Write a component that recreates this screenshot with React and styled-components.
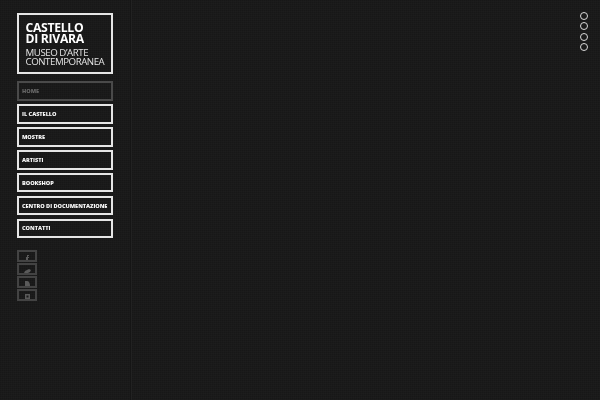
import React from 'react';
import styled, { createGlobalStyle } from 'styled-components';

const GlobalStyle = createGlobalStyle`
    html, body {
        margin: 0;
        padding: 0;
        height: 100%;
        background-color: #1a1a1a;
    }
    #root {
        height: 100%;
    }
`;

const Page = styled.div`
    display: flex;
    flex-direction: row;
    width: 600px;
    height: 400px;
    overflow: hidden;
    font-family: "Open Sans", "Liberation Sans", sans-serif;
    background-color: #1a1a1a;
    background-image:
        repeating-linear-gradient(0deg, rgba(255,255,255,0.012) 0 1px, transparent 1px 2px),
        repeating-linear-gradient(90deg, rgba(0,0,0,0.1) 0 1px, transparent 1px 2px);
`;

const Sidebar = styled.aside`
    box-sizing: border-box;
    width: 131px;
    height: 100%;
    padding: 13px 0 0 17px;
    border-right: 1px solid #151515;
    box-shadow: 1px 0 0 #222;
    will-change: transform;
`;

const Logo = styled.div`
    box-sizing: border-box;
    width: 96px;
    height: 61px;
    padding: 7px 0 0 6.5px;
    margin-bottom: 7.4px;
    border: 2px solid #e6e6e6;
    color: #fff;
    text-transform: uppercase;
`;

const LogoTitle = styled.div`
    font-size: 12.2px;
    line-height: 11.2px;
    font-weight: 700;
    letter-spacing: -0.3px;
    margin-bottom: 4.5px;
`;

const LogoSub = styled.div`
    font-size: 9.7px;
    line-height: 8.8px;
    font-weight: 400;
    letter-spacing: -0.45px;
    color: #e4e4e4;
    white-space: nowrap;
`;

const Nav = styled.nav`
    display: flex;
    flex-direction: column;
    gap: 3.4px;
    width: 96px;
    margin-bottom: 12px;
`;

const NavItem = styled.a`
    box-sizing: border-box;
    display: flex;
    align-items: center;
    height: 19.5px;
    padding-left: 3px;
    border: 2px solid ${p => (p.$current ? '#4a4a4a' : '#e6e6e6')};
    color: ${p => (p.$current ? '#666' : '#f6f6f6')};
    font-size: 5.6px;
    font-weight: 800;
    letter-spacing: -0.04px;
    text-transform: uppercase;
    white-space: nowrap;
`;

const Social = styled.div`
    display: flex;
    flex-direction: column;
    gap: 1px;
`;

const SocialLink = styled.a`
    box-sizing: border-box;
    display: flex;
    align-items: flex-end;
    justify-content: center;
    width: 20px;
    height: 12px;
    overflow: hidden;
    border: 2px solid #434343;
    color: #5a5a5a;
`;

const Main = styled.main`
    flex: 1;
    display: flex;
    justify-content: flex-end;
    padding: 12px 12px 0 0;
`;

const Dots = styled.div`
    display: flex;
    flex-direction: column;
    gap: 2.4px;
`;

const Dot = styled.span`
    box-sizing: border-box;
    display: block;
    width: 8px;
    height: 8px;
    border: 1.5px solid #d8d8d8;
    border-radius: 50%;
`;

const icons = [
    <path key="f" d="M3 6V3h1V1h2v1H5v1h1v1H5v2z" fill="currentColor" />,
    <path key="t" d="M1 6l1-2 2-1 2-1 2 1-1 2-2 1z" fill="currentColor" />,
    <path key="r" d="M2 6V1h2c2 0 3 2 3 5z" fill="currentColor" />,
    <path key="i" d="M2 1h5v5H2zM3.5 2.5v2h2v-2z" fill="currentColor" fillRule="evenodd" />,
];

const menu = ['Il Castello', 'Mostre', 'Artisti', 'Bookshop', 'Centro di documentazione', 'Contatti'];

export default function App() {
    return (
        <Page>
            <GlobalStyle />
            <Sidebar>
                <Logo>
                    <LogoTitle>Castello<br />di Rivara</LogoTitle>
                    <LogoSub>Museo d’arte<br />contemporanea</LogoSub>
                </Logo>
                <Nav>
                    <NavItem $current>Home</NavItem>
                    {menu.map(m => <NavItem key={m}>{m}</NavItem>)}
                </Nav>
                <Social>
                    {icons.map((ic, i) => (
                        <SocialLink key={i}>
                            <svg width="9" height="6" viewBox="0 0 9 6">{ic}</svg>
                        </SocialLink>
                    ))}
                </Social>
            </Sidebar>
            <Main>
                <Dots>
                    <Dot /><Dot /><Dot /><Dot />
                </Dots>
            </Main>
        </Page>
    );
}
